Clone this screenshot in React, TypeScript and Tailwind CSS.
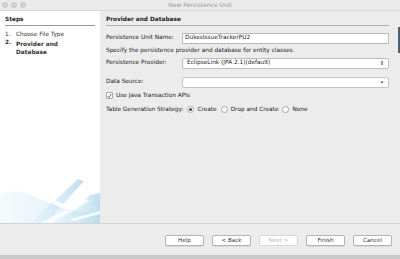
import React from 'react';

const font = { fontFamily: '"DejaVu Sans", "Liberation Sans", sans-serif' };

const Btn: React.FC<{ label: string; disabled?: boolean }> = ({ label, disabled }) => (
  <div
    className={`w-[39px] h-[11px] flex items-center justify-center rounded-[2px] border bg-white text-[5.6px] leading-none ${
      disabled ? 'border-[#d6d6d6] text-[#b5b5b5]' : 'border-[#b4b4b4] text-[#333] shadow-[0_0.5px_0_#c8c8c8]'
    }`}
  >
    {label}
  </div>
);

const Radio: React.FC<{ checked?: boolean; label: string }> = ({ checked, label }) => (
  <div className="flex items-center gap-[3px]">
    <span className="w-[7px] h-[7px] rounded-full border border-[#a8a8a8] bg-white flex items-center justify-center">
      {checked && <span className="w-[3px] h-[3px] rounded-full bg-[#444]" />}
    </span>
    <span>{label}</span>
  </div>
);

const Swoosh = () => (
  <svg width="100" height="50" viewBox="0 0 100 50" className="block">
    <defs>
      <linearGradient id="g1" x1="0" y1="0" x2="1" y2="0">
        <stop offset="0" stopColor="#d6ecf5" stopOpacity="0.3" />
        <stop offset="0.6" stopColor="#c6e3f0" stopOpacity="0.7" />
        <stop offset="1" stopColor="#b3d9ea" stopOpacity="0.85" />
      </linearGradient>
      <linearGradient id="g2" x1="0" y1="0" x2="1" y2="0">
        <stop offset="0" stopColor="#e6f3f9" stopOpacity="0.4" />
        <stop offset="1" stopColor="#cbe6f2" stopOpacity="0.85" />
      </linearGradient>
    </defs>
    <polygon points="0,20 20,18 60,34 100,42 100,50 0,50" fill="url(#g2)" />
    <polygon points="30,50 78,6 84,8 46,50" fill="url(#g1)" />
    <polygon points="60,50 90,22 100,20 100,50" fill="url(#g1)" />
    <polygon points="8,10 14,9 70,34 66,37" fill="#ffffff" opacity="0.9" />
    <polygon points="40,50 86,26 90,28 52,50" fill="#ffffff" opacity="0.7" />
    <polygon points="70,46 100,38 100,41 74,48" fill="#ffffff" opacity="0.8" />
  </svg>
);

export default function App() {
  return (
    <div className="relative w-[400px] h-[259px] bg-[#ececec] flex flex-col text-[#222] text-[5.8px] leading-none overflow-hidden" style={font}>
      {/* Title bar */}
      <div className="h-[11px] relative flex items-center justify-center bg-[#eaeaea] border-b border-[#d9d9d9]">
        <div className="absolute left-[2px] top-[2px] flex gap-[3px]">
          <span className="w-[6px] h-[6px] rounded-full bg-[#d4d4d4] border border-[#c6c6c6]" />
          <span className="w-[6px] h-[6px] rounded-full bg-[#d4d4d4] border border-[#c6c6c6]" />
          <span className="w-[6px] h-[6px] rounded-full bg-[#d4d4d4] border border-[#c6c6c6]" />
        </div>
        <span className="text-[6px] text-[#9a9a9a]">New Persistence Unit</span>
      </div>

      {/* window behind, peeking at the right edge */}
      <div className="absolute right-0 top-[27px] w-[2px] h-[26px] bg-[#4a5f78]" />

      {/* Body */}
      <div className="flex h-[213px] border-b border-[#d4d4d4]">
        {/* Steps */}
        <div className="w-[100px] bg-white flex flex-col justify-between">
          <div className="px-[5px] pt-[6px]">
            <div className="font-bold pb-[2px] border-b border-[#9a9a9a]">Steps</div>
            <ol className="mt-[6px] flex flex-col gap-[2px] text-[#333]">
              <li className="flex"><span className="w-[11px]">1.</span><span>Choose File Type</span></li>
              <li className="flex font-bold"><span className="w-[11px]">2.</span><span className="leading-[8px]">Provider and<br />Database</span></li>
            </ol>
          </div>
          <Swoosh />
        </div>

        {/* Content */}
        <div className="flex-1 pl-[6px] pr-[11px] pt-[6px]">
          <div className="font-bold pb-[2px] border-b border-[#b0b0b0]">Provider and Database</div>
          <div className="mt-[7px] flex items-center h-[11px]">
            <span className="w-[76px] whitespace-nowrap">Persistence Unit Name:</span>
            <div className="flex-1 h-[11px] bg-white border border-[#b9b9b9] flex items-center px-[2px]">DukesIssueTrackerPU2</div>
          </div>
          <div className="mt-[3px] h-[8px] flex items-center whitespace-nowrap">Specify the persistence provider and database for entity classes.</div>
          <div className="mt-[3px] flex items-center h-[11px]">
            <span className="w-[76px] whitespace-nowrap">Persistence Provider:</span>
            <div className="flex-1 h-[11px] bg-white border border-[#bdbdbd] rounded-[2px] flex items-center justify-between px-[4px]">
              <span>EclipseLink (JPA 2.1)(default)</span>
              <svg width="4" height="6" viewBox="0 0 4 6">
                <path d="M0.5 2.5 L2 0.8 L3.5 2.5 Z M0.5 3.5 L2 5.2 L3.5 3.5 Z" fill="#555" />
              </svg>
            </div>
          </div>
          <div className="mt-[8px] flex items-center h-[11px]">
            <span className="w-[76px] whitespace-nowrap">Data Source:</span>
            <div className="flex-1 h-[11px] bg-white border border-[#c4c4c4] rounded-[2px] flex items-center justify-end px-[4px]">
              <svg width="4" height="3" viewBox="0 0 4 3">
                <path d="M0.3 0.5 L3.7 0.5 L2 2.6 Z" fill="#555" />
              </svg>
            </div>
          </div>
          <div className="mt-[3px] h-[10px] flex items-center gap-[3px]">
            <span className="w-[7px] h-[7px] border border-[#a8a8a8] bg-white rounded-[1px] flex items-center justify-center">
              <svg width="6" height="6" viewBox="0 0 6 6">
                <path d="M1 3.2 L2.4 4.8 L5.2 0.6" stroke="#333" strokeWidth="0.9" fill="none" />
              </svg>
            </span>
            <span>Use Java Transaction APIs</span>
          </div>
          <div className="mt-[4px] h-[10px] flex items-center gap-[4px]">
            <span>Table Generation Strategy:</span>
            <Radio checked label="Create" />
            <Radio label="Drop and Create" />
            <Radio label="None" />
          </div>
        </div>
      </div>

      {/* Buttons */}
      <div className="h-[31px] flex items-center justify-end gap-[8px] pr-[8px] pt-[2px]">
        <Btn label="Help" />
        <Btn label="< Back" />
        <Btn label="Next >" disabled />
        <Btn label="Finish" />
        <Btn label="Cancel" />
      </div>
      <div className="flex-1 bg-[#c9c9c9]" />
    </div>
  );
}
